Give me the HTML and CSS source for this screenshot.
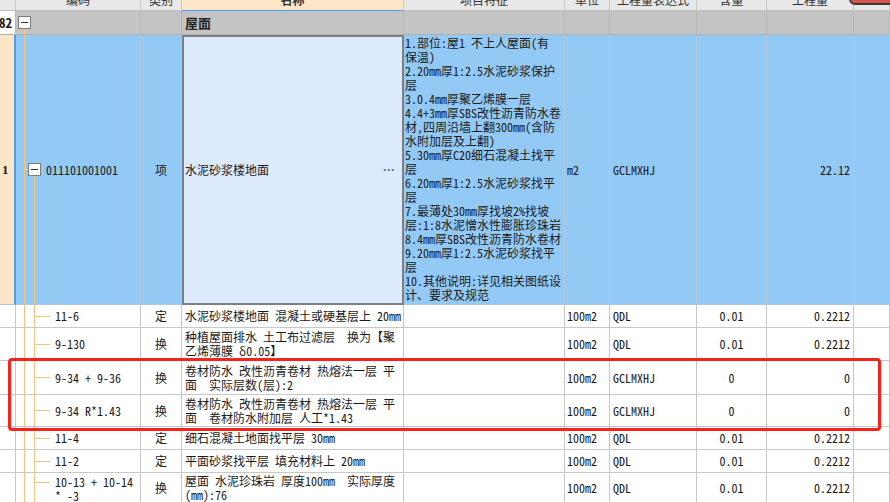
FILE: index.html
```html
<!DOCTYPE html>
<html lang="zh">
<head>
<meta charset="utf-8">
<link rel="stylesheet" href="styles.css">
</head>
<body>
<div class="sheet">
  <div class="row head">
    <div class="c"></div>
    <div class="c ctr">编码</div>
    <div class="c ctr">类别</div>
    <div class="c ctr sel-col">名称</div>
    <div class="c ctr">项目特征</div>
    <div class="c ctr">单位</div>
    <div class="c ctr">工程量表达式</div>
    <div class="c ctr">含量</div>
    <div class="c ctr">工程量</div>
    <div class="c"></div>
  </div>

  <div class="row grp">
    <div class="c num rt">82</div>
    <div class="c code-grp"><span class="box"></span></div>
    <div class="c"></div>
    <div class="c name"><b class="grp-title">屋面</b></div>
    <div class="c"></div>
    <div class="c"></div>
    <div class="c"></div>
    <div class="c"></div>
    <div class="c"></div>
    <div class="c"></div>
  </div>

  <div class="row main">
    <div class="c num main-num">1</div>
    <div class="c code-main"><span class="box"></span>011101001001</div>
    <div class="c ctr">项</div>
    <div class="c name selected"><span>水泥砂浆楼地面</span><span class="dots">···</span></div>
    <div class="c feat">1.部位:屋1 不上人屋面(有<br>保温)<br>2.20mm厚1:2.5水泥砂浆保护<br>层<br>3.0.4mm厚聚乙烯膜一层<br>4.4+3mm厚SBS改性沥青防水卷<br>材,四周沿墙上翻300mm(含防<br>水附加层及上翻)<br>5.30mm厚C20细石混凝土找平<br>层<br>6.20mm厚1:2.5水泥砂浆找平<br>层<br>7.最薄处30mm厚找坡2%找坡<br>层:1:8水泥憎水性膨胀珍珠岩<br>8.4mm厚SBS改性沥青防水卷材<br>9.20mm厚1:2.5水泥砂浆找平<br>层<br>10.其他说明:详见相关图纸设<br>计、要求及规范</div>
    <div class="c unit">m2</div>
    <div class="c expr">GCLMXHJ</div>
    <div class="c ctr"></div>
    <div class="c rt">22.12</div>
    <div class="c"></div>
  </div>

  <div class="row sub h23">
    <div class="c num"></div>
    <div class="c code-sub">11-6</div>
    <div class="c ctr">定</div>
    <div class="c name">水泥砂浆楼地面 混凝土或硬基层上 20mm</div>
    <div class="c"></div>
    <div class="c unit">100m2</div>
    <div class="c expr">QDL</div>
    <div class="c ctr">0.01</div>
    <div class="c rt">0.2212</div>
    <div class="c"></div>
  </div>

  <div class="row sub h33">
    <div class="c num"></div>
    <div class="c code-sub">9-130</div>
    <div class="c ctr">换</div>
    <div class="c name">种植屋面排水 土工布过滤层　换为【聚<br>乙烯薄膜 δ0.05】</div>
    <div class="c"></div>
    <div class="c unit">100m2</div>
    <div class="c expr">QDL</div>
    <div class="c ctr">0.01</div>
    <div class="c rt">0.2212</div>
    <div class="c"></div>
  </div>

  <div class="row sub h34">
    <div class="c num"></div>
    <div class="c code-sub">9-34 + 9-36</div>
    <div class="c ctr">换</div>
    <div class="c name">卷材防水 改性沥青卷材 热熔法一层 平<br>面　实际层数(层):2</div>
    <div class="c"></div>
    <div class="c unit">100m2</div>
    <div class="c expr">GCLMXHJ</div>
    <div class="c ctr">0</div>
    <div class="c rt">0</div>
    <div class="c"></div>
  </div>

  <div class="row sub h32">
    <div class="c num"></div>
    <div class="c code-sub">9-34 R*1.43</div>
    <div class="c ctr">换</div>
    <div class="c name">卷材防水 改性沥青卷材 热熔法一层 平<br>面　卷材防水附加层 人工*1.43</div>
    <div class="c"></div>
    <div class="c unit">100m2</div>
    <div class="c expr">GCLMXHJ</div>
    <div class="c ctr">0</div>
    <div class="c rt">0</div>
    <div class="c"></div>
  </div>

  <div class="row sub h23">
    <div class="c num"></div>
    <div class="c code-sub">11-4</div>
    <div class="c ctr">定</div>
    <div class="c name">细石混凝土地面找平层 30mm</div>
    <div class="c"></div>
    <div class="c unit">100m2</div>
    <div class="c expr">QDL</div>
    <div class="c ctr">0.01</div>
    <div class="c rt">0.2212</div>
    <div class="c"></div>
  </div>

  <div class="row sub h23">
    <div class="c num"></div>
    <div class="c code-sub">11-2</div>
    <div class="c ctr">定</div>
    <div class="c name">平面砂浆找平层 填充材料上 20mm</div>
    <div class="c"></div>
    <div class="c unit">100m2</div>
    <div class="c expr">QDL</div>
    <div class="c ctr">0.01</div>
    <div class="c rt">0.2212</div>
    <div class="c"></div>
  </div>

  <div class="row sub h30">
    <div class="c num"></div>
    <div class="c code-sub">10-13 + 10-14<br>* -3</div>
    <div class="c ctr">换</div>
    <div class="c name">屋面 水泥珍珠岩 厚度100mm　实际厚度<br>(mm):76</div>
    <div class="c"></div>
    <div class="c unit">100m2</div>
    <div class="c expr">QDL</div>
    <div class="c ctr">0.01</div>
    <div class="c rt">0.2212</div>
    <div class="c"></div>
  </div>

  <div class="redbox"></div>
  <div class="corner"></div>
</div>
</body>
</html>
```

FILE: styles.css
```css
html, body {
  margin: 0;
  padding: 0;
  background: #ffffff;
  overflow: hidden;
}

body {
  font-family: "Noto Sans Mono CJK SC", "Noto Sans CJK SC", sans-serif;
  font-size: 12px;
  line-height: 14px;
  color: #1a1a1a;
}

.sheet {
  position: relative;
  width: 890px;
  height: 502px;
  overflow: hidden;
}

.row {
  display: grid;
  grid-template-columns: 16px 125px 41px 222px 161px 45px 87px 70px 87px 36px;
}

.c {
  box-sizing: border-box;
  border-right: 1px solid #c8c8c8;
  border-bottom: 1px solid #c8c8c8;
  display: flex;
  align-items: center;
  padding: 0 2px;
  overflow: hidden;
  white-space: nowrap;
}

.ctr { justify-content: center; }
.rt { justify-content: flex-end; padding-right: 3px; }

/* header */
.head {
  height: 22px;
  margin-top: -11px;
  background: #e8e8e8;
}
.head .c {
  border-bottom-color: #c0c0c0;
  color: #333;
}
.head .sel-col {
  background: #ffe7c9;
  border-bottom: 1px solid #4a9df2;
  font-weight: bold;
}

/* group row */
.grp {
  height: 24px;
  background: #c4c4c4;
}
.grp .c {
  border-right-color: #b8b8b8;
  border-bottom-color: #b0b0b0;
}
.grp .num {
  background: #ffffff;
  font-weight: bold;
  font-size: 13px;
}
.grp-title {
  font-size: 13px;
  color: #222;
}

.num { padding: 0 3px 0 1px; }

.box {
  box-sizing: border-box;
  display: inline-block;
  width: 13px;
  height: 13px;
  border: 1px solid #7c7c7c;
  background: #fff linear-gradient(#333, #333) center / 7px 1px no-repeat;
  flex: none;
}

.code-grp {
  padding-left: 2px;
  background:
    linear-gradient(to bottom, transparent 70%, #f7c47e 70%) 8px 0 / 1px 100% no-repeat;
}

/* main row */
.main {
  height: 270px;
  background: #93c9f5;
}
.main .c {
  border-right-color: #b3c7d8;
  border-bottom-color: #b3c7d8;
}
.main .main-num {
  background: #ffe6c9;
  border-right: 2px solid #4a9df2;
  font-weight: bold;
  font-family: "Liberation Serif", serif;
  font-size: 13px;
  padding-left: 2px;
}
.code-main {
  padding-left: 12px;
  background:
    linear-gradient(#f7c47e, #f7c47e) 8px 0 / 1px 100% no-repeat,
    linear-gradient(#f7c47e, #f7c47e) 8px 50% / 4px 1px no-repeat,
    linear-gradient(to bottom, transparent 50%, #f7c47e 50%) 18px 0 / 1px 100% no-repeat;
}
.code-main .box { margin-right: 5px; }

.main .selected {
  background: #dde9fc;
  border: 2px solid #7f7f7f;
  justify-content: space-between;
  padding-left: 1px;
  padding-right: 7px;
}
.dots {
  color: #2f6fcf;
  font-family: "Liberation Sans", sans-serif;
  font-weight: bold;
  font-size: 12px;
}

.feat {
  align-items: flex-start;
  padding-left: 1px;
  padding-top: 1px;
}

/* sub rows */
.sub .c { line-height: 14px; }
.h23 { height: 23px; }
.h30 { height: 30px; }
.h32 { height: 32px; }
.h33 { height: 33px; }
.h34 { height: 34px; }

.code-sub {
  padding-left: 39px;
  background:
    linear-gradient(#f7c47e, #f7c47e) 8px 0 / 1px 100% no-repeat,
    linear-gradient(#f7c47e, #f7c47e) 18px 0 / 1px 100% no-repeat,
    linear-gradient(#f7c47e, #f7c47e) 18px 50% / 16px 1px no-repeat;
}
.h30 .code-sub {
  align-items: flex-start;
  padding-top: 2px;
  background:
    linear-gradient(#f7c47e, #f7c47e) 8px 0 / 1px 100% no-repeat,
    linear-gradient(#f7c47e, #f7c47e) 18px 0 / 1px 100% no-repeat,
    linear-gradient(#f7c47e, #f7c47e) 18px 9px / 16px 1px no-repeat;
}

.name { padding-left: 3px; }
.unit { padding-left: 2px; }
.expr { padding-left: 3px; }

/* overlays */
.redbox {
  position: absolute;
  left: 8px;
  top: 358px;
  width: 873px;
  height: 73px;
  box-sizing: border-box;
  border: 3px solid #f4231c;
  border-radius: 4px;
  pointer-events: none;
}
.corner {
  position: absolute;
  left: 849px;
  top: -12px;
  width: 52px;
  height: 17px;
  box-sizing: border-box;
  border: 2px solid #3a3a3a;
  border-radius: 6px;
  background: #d9534f;
}
```
